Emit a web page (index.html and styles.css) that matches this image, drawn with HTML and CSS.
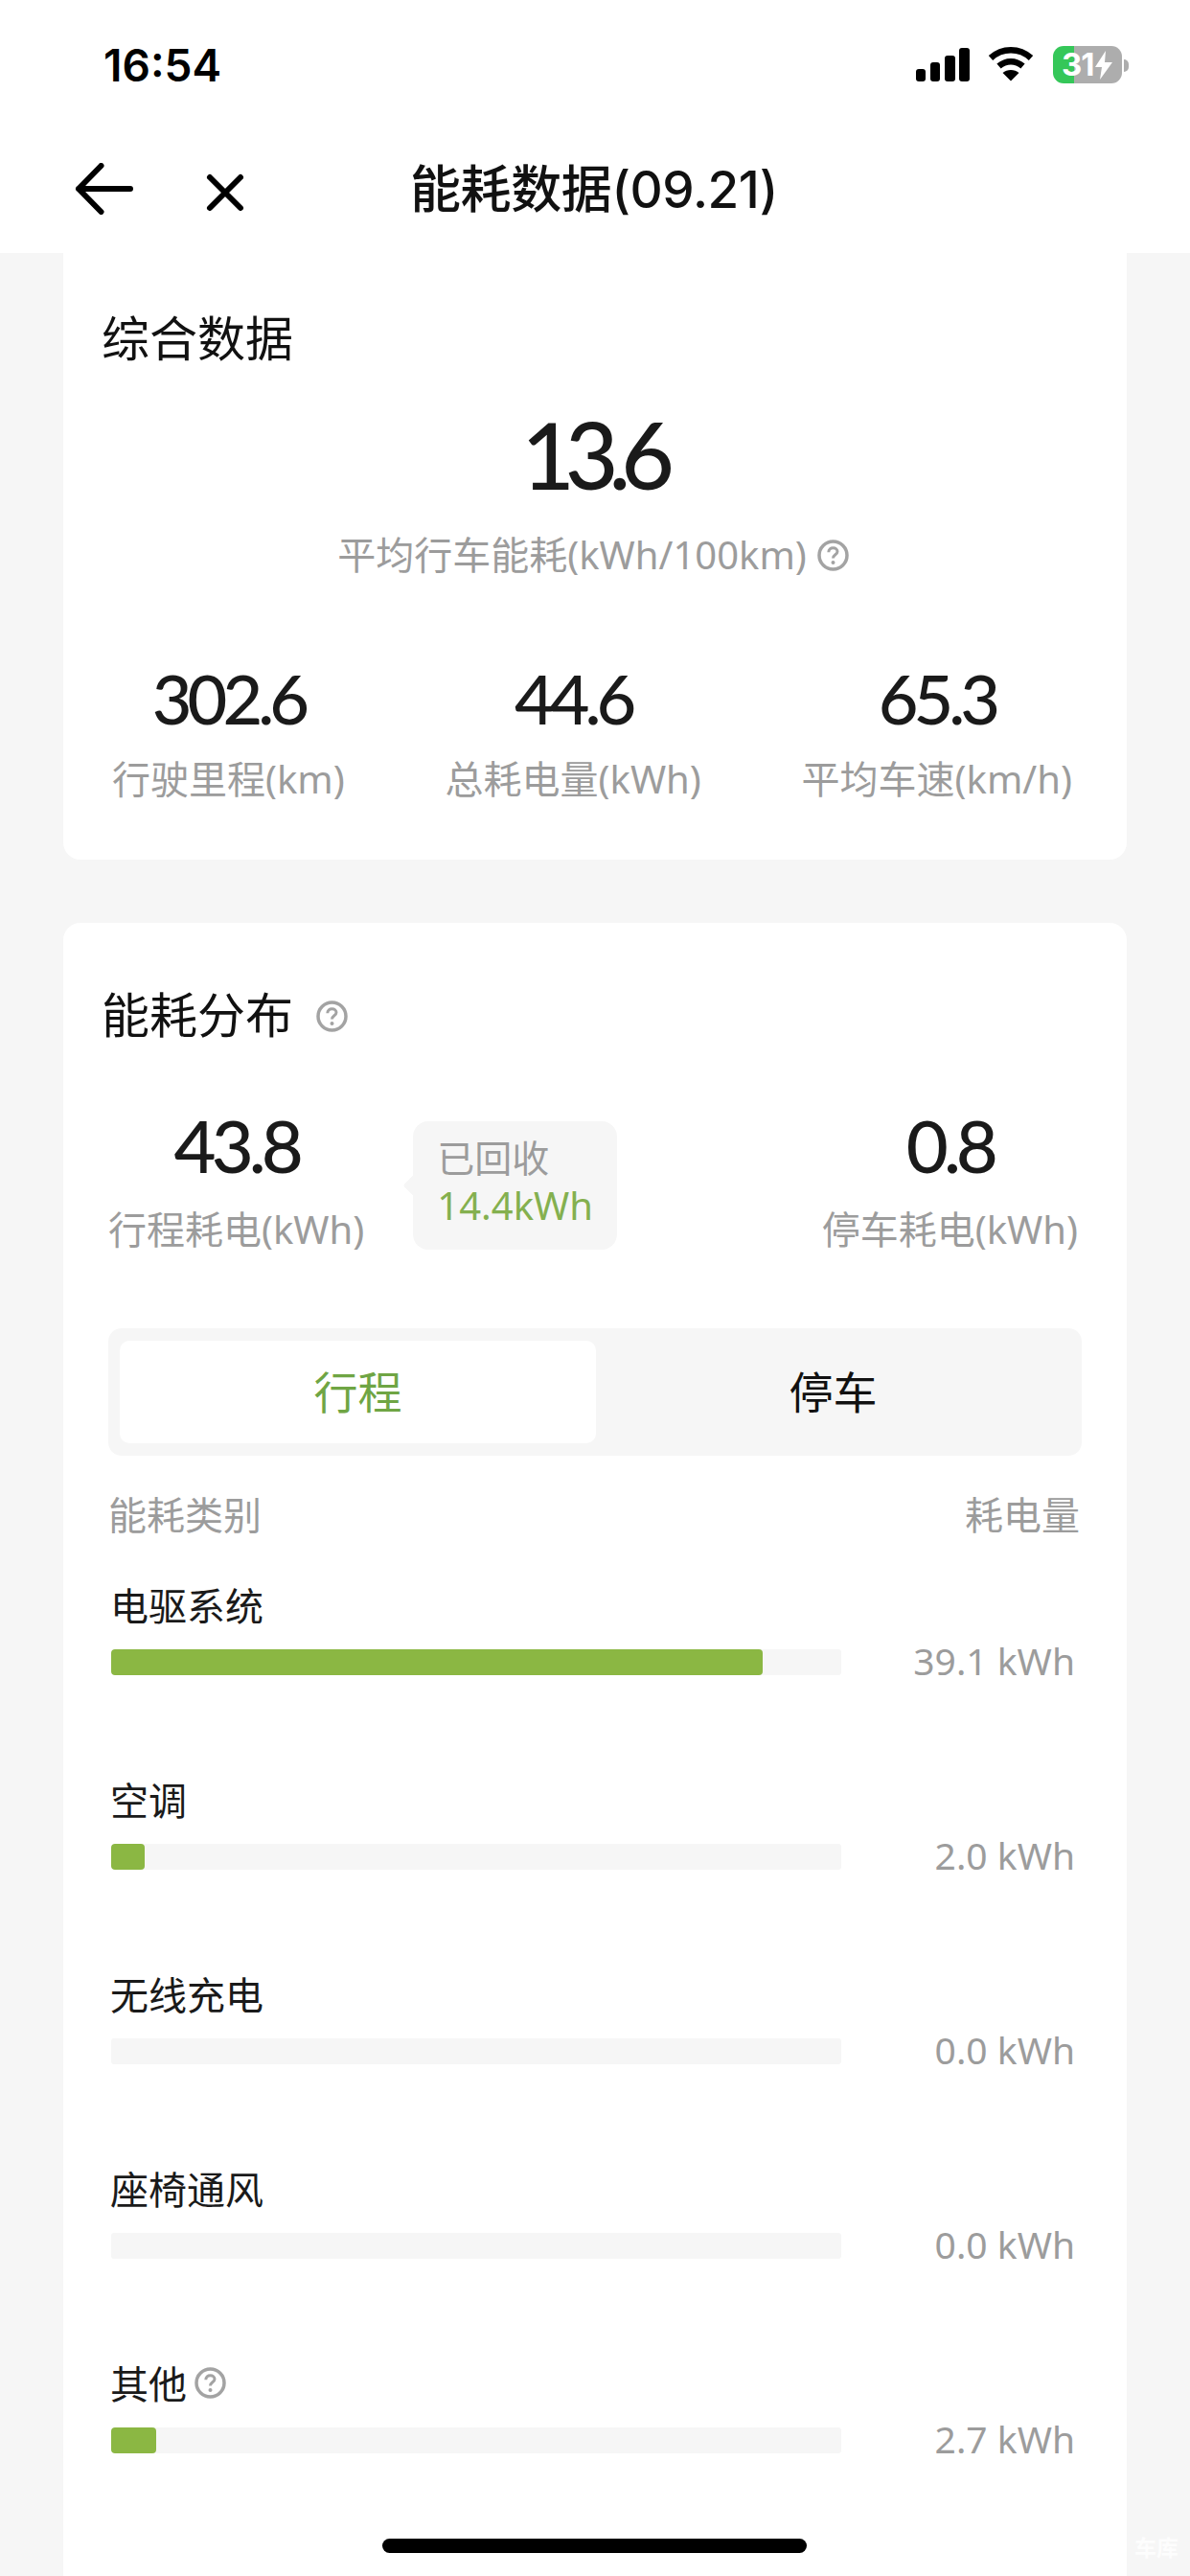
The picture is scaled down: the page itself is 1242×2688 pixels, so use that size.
FILE: index.html
```html
<!DOCTYPE html>
<html lang="zh-CN">
<head>
<meta charset="utf-8">
<title>能耗数据</title>
<link rel="stylesheet" href="styles.css">
</head>
<body>
<div class="page">
  <header class="top">
    <div class="status">
      <span class="time">16:54</span>
      <div class="status-icons">
        <svg class="signal" width="56" height="35" viewBox="0 0 56 35"><rect x="0" y="22" width="10" height="13" rx="3"/><rect x="15" y="15" width="10" height="20" rx="3"/><rect x="30" y="8" width="11" height="27" rx="3"/><rect x="45" y="0" width="11" height="35" rx="3"/></svg>
        <svg class="wifi" width="48" height="36" viewBox="0 0 48 36"><path d="M3 11.500C15 0.500 33 0.500 45 11.500" fill="none" stroke="#000" stroke-width="6.500"/><path d="M11.500 20C19 13.500 29 13.500 36.500 20" fill="none" stroke="#000" stroke-width="6.500"/><path d="M24 35.500L15.500 27C20 23 28 23 32.500 27Z"/></svg>
        <div class="battery"><span class="battery-num">31</span><svg class="bolt" width="18" height="30" viewBox="0 0 18 30"><path d="M11 0L0 17H7L5 30L18 12H10Z" fill="#fff"/></svg></div>
      </div>
    </div>
    <nav class="navbar">
      <svg class="back" width="62" height="54" viewBox="0 0 62 54"><path d="M27.500 3L4 27L27.500 51M4 27H58" fill="none" stroke="#000" stroke-width="6" stroke-linecap="round" stroke-linejoin="round"/></svg>
      <svg class="close" width="42" height="42" viewBox="0 0 42 42"><path d="M5 5L37 37M37 5L5 37" fill="none" stroke="#000" stroke-width="6" stroke-linecap="round"/></svg>
      <h1 class="nav-title">能耗数据(09.21)</h1>
    </nav>
  </header>

  <main class="content">
    <section class="card card-summary">
      <h2 class="card-title">综合数据</h2>
      <div class="hero">
        <div class="num num-xl">13.6</div>
        <div class="label hero-label">平均行车能耗(kWh/100km)
          <svg class="help" width="33" height="33" viewBox="0 0 33 33"><circle cx="16.500" cy="16.500" r="14.500" fill="none" stroke="#a3a3a3" stroke-width="3.500"/><path d="M11.800 13.200C11.800 10.300 14 8.800 16.500 8.800C19.100 8.800 21 10.400 21 12.600C21 15.800 16.500 15.800 16.500 19.500" fill="none" stroke="#a3a3a3" stroke-width="3"/><circle cx="16.500" cy="24" r="2" fill="#a3a3a3"/></svg>
        </div>
      </div>
      <div class="stats">
        <div class="stat"><div class="num">302.6</div><div class="label">行驶里程(km)</div></div>
        <div class="stat"><div class="num">44.6</div><div class="label">总耗电量(kWh)</div></div>
        <div class="stat"><div class="num">65.3</div><div class="label">平均车速(km/h)</div></div>
      </div>
    </section>

    <section class="card card-dist">
      <h2 class="card-title card-title-help">能耗分布
        <svg class="help" width="33" height="33" viewBox="0 0 33 33"><circle cx="16.500" cy="16.500" r="14.500" fill="none" stroke="#a3a3a3" stroke-width="3.500"/><path d="M11.800 13.200C11.800 10.300 14 8.800 16.500 8.800C19.100 8.800 21 10.400 21 12.600C21 15.800 16.500 15.800 16.500 19.500" fill="none" stroke="#a3a3a3" stroke-width="3"/><circle cx="16.500" cy="24" r="2" fill="#a3a3a3"/></svg>
      </h2>
      <div class="split">
        <div class="stat"><div class="num">43.8</div><div class="label">行程耗电(kWh)</div></div>
        <div class="bubble">
          <div class="bubble-label">已回收</div>
          <div class="bubble-value">14.4kWh</div>
        </div>
        <div class="stat"><div class="num">0.8</div><div class="label">停车耗电(kWh)</div></div>
      </div>
      <div class="tabs">
        <div class="tab tab-active">行程</div>
        <div class="tab">停车</div>
      </div>
      <div class="list-head"><span>能耗类别</span><span>耗电量</span></div>
      <div class="rows">
        <div class="row">
          <div class="row-name">电驱系统</div>
          <div class="row-line"><div class="track"><div class="fill" style="width:89.3%"></div></div><div class="row-val">39.1 kWh</div></div>
        </div>
        <div class="row">
          <div class="row-name">空调</div>
          <div class="row-line"><div class="track"><div class="fill" style="width:4.6%"></div></div><div class="row-val">2.0 kWh</div></div>
        </div>
        <div class="row">
          <div class="row-name">无线充电</div>
          <div class="row-line"><div class="track"></div><div class="row-val">0.0 kWh</div></div>
        </div>
        <div class="row">
          <div class="row-name">座椅通风</div>
          <div class="row-line"><div class="track"></div><div class="row-val">0.0 kWh</div></div>
        </div>
        <div class="row">
          <div class="row-name row-name-help">其他
            <svg class="help" width="33" height="33" viewBox="0 0 33 33"><circle cx="16.500" cy="16.500" r="14.500" fill="none" stroke="#a3a3a3" stroke-width="3.500"/><path d="M11.800 13.200C11.800 10.300 14 8.800 16.500 8.800C19.100 8.800 21 10.400 21 12.600C21 15.800 16.500 15.800 16.500 19.500" fill="none" stroke="#a3a3a3" stroke-width="3"/><circle cx="16.500" cy="24" r="2" fill="#a3a3a3"/></svg>
          </div>
          <div class="row-line"><div class="track"><div class="fill" style="width:6.2%"></div></div><div class="row-val">2.7 kWh</div></div>
        </div>
      </div>
    </section>
  </main>

  <div class="home-bar"></div>
  <div class="watermark">车库</div>
</div>
</body>
</html>
```

FILE: styles.css
```css
* { box-sizing: border-box; margin: 0; padding: 0; }
html, body { width: 1242px; height: 2688px; overflow: hidden; background: #f6f6f6; }
body { font-family: "Noto Sans", "Noto Sans CJK SC", sans-serif; color: #1a1a1a; }
.page { position: relative; width: 1242px; height: 2688px; overflow: hidden; }

.top { height: 264px; background: #fff; display: flex; flex-direction: column; }
.status { height: 135px; padding: 48px 71px 0 108px; display: flex; justify-content: space-between; align-items: flex-start; }
.time { font-family: "Inter", sans-serif; font-weight: 600; font-size: 46px; line-height: 40px; color: #000; }
.status-icons { display: flex; align-items: flex-start; }
.signal { display: block; margin-top: 2px; margin-right: 19px; }
.wifi { display: block; margin-top: 1px; margin-right: 20px; }
.battery { position: relative; width: 72px; height: 39px; border-radius: 11px; background: linear-gradient(90deg, #35c759 0 22px, #adadad 22px 100%); display: flex; align-items: center; padding-left: 9px; }
.battery::after { content: ""; position: absolute; left: 74px; top: 14px; width: 5px; height: 13px; border-radius: 0 5px 5px 0; background: #adadad; }
.battery-num { font-family: "Inter", sans-serif; font-weight: 700; font-size: 33px; line-height: 39px; color: #fff; letter-spacing: -1px; }
.bolt { display: block; margin-left: 1px; }

.navbar { height: 129px; display: flex; align-items: flex-start; padding: 35px 0 0 78px; }
.back { display: block; flex: none; }
.close { display: block; flex: none; margin: 10px 0 0 74px; }
.nav-title { font-family: "Inter", "Noto Sans CJK SC", sans-serif; font-weight: 500; font-size: 53px; line-height: 66px; color: #111; margin: -5px 0 0 172px; white-space: nowrap; letter-spacing: -0.4px; }

.content { padding: 0 66px; display: flex; flex-direction: column; gap: 66px; }
.card { background: #fff; width: 1110px; }
.card-summary { height: 633px; border-radius: 0 0 18px 18px; padding: 51px 55px 0 51px; }
.card-dist { height: 1760px; border-radius: 18px; padding: 58px 47px 0 47px; }

.card-title { font-weight: 400; font-size: 50px; line-height: 70px; color: #111; font-family: "Noto Sans CJK SC", sans-serif; }
.card-summary .card-title { margin-left: -11px; }
.card-title-help { display: flex; align-items: center; gap: 24px; }
.card-dist .card-title { margin-left: -7px; }
.card-title-help .help { position: relative; top: 4px; }

.num { font-family: "Lato", sans-serif; font-weight: 500; font-size: 72px; line-height: 72px; letter-spacing: -5px; color: #1a1a1a; text-align: center; }
.num-xl { font-size: 96px; line-height: 96px; letter-spacing: -10px; }
.split .num { font-size: 76px; }
.label { font-size: 40px; line-height: 50px; color: #9c9c9c; text-align: center; white-space: nowrap; font-family: "Noto Sans", "Noto Sans CJK SC", sans-serif; font-weight: 400; }
.hero { display: flex; flex-direction: column; align-items: center; margin-top: 41px; }
.hero-label { margin-top: 32px; display: flex; align-items: center; gap: 11px; }
.help { display: block; flex: none; }

.stats { display: flex; justify-content: space-between; margin-top: 88px; padding-right: 2px; }
.stat { display: flex; flex-direction: column; align-items: center; }
.stat .label { margin-top: 24px; }

.split { display: flex; align-items: flex-start; margin-top: 68px; padding-right: 4px; }
.split .stat .label { margin-top: 27px; }
.bubble { position: relative; width: 213px; height: 134px; background: #f6f6f6; border-radius: 16px; margin: 11px 0 0 51px; padding: 10px 0 0 25px; }
.bubble::before { content: ""; position: absolute; left: -7px; top: 59px; width: 16px; height: 16px; background: #f6f6f6; transform: rotate(45deg); border-radius: 2px; }
.bubble-label { font-size: 39px; line-height: 52px; color: #9c9c9c; font-family: "Noto Sans CJK SC", sans-serif; font-weight: 400; }
.bubble-value { font-size: 40px; line-height: 52px; color: #84b04f; white-space: nowrap; }
.split .stat:last-child { margin-left: auto; }

.tabs { display: flex; height: 133px; margin-top: 78px; padding: 13px 12px; background: #f6f6f6; border-radius: 14px; width: 1016px; }
.tab { flex: 1; display: flex; align-items: center; justify-content: center; padding-bottom: 6px; font-size: 46px; color: #111; border-radius: 10px; font-family: "Noto Sans CJK SC", sans-serif; font-weight: 400; }
.tab-active { flex: none; width: 497px; background: #fff; color: #6fa544; }

.list-head { display: flex; justify-content: space-between; font-size: 40px; line-height: 50px; color: #9c9c9c; margin-top: 35px; font-family: "Noto Sans CJK SC", sans-serif; font-weight: 400; padding-right: 2px; }

.rows { margin-top: 45px; display: flex; flex-direction: column; gap: 82px; padding-left: 3px; }
.row { height: 121px; display: flex; flex-direction: column; }
.row-name { font-size: 40px; line-height: 50px; color: #1a1a1a; font-family: "Noto Sans CJK SC", sans-serif; font-weight: 400; height: 50px; margin-left: -1px; }
.row-name-help { display: flex; align-items: center; gap: 8px; }
.row-line { display: flex; align-items: flex-start; margin-top: 22px; }
.track { width: 762px; height: 27px; background: #f6f6f6; border-radius: 3px; overflow: hidden; flex: none; }
.fill { height: 27px; background: #8bb743; border-radius: 4px; }
.row-val { margin-left: auto; margin-right: 7px; font-size: 39px; line-height: 23px; color: #9c9c9c; white-space: nowrap; }

.home-bar { position: absolute; left: 399px; top: 2649px; width: 443px; height: 15px; background: #000; border-radius: 8px; }
.watermark { position: absolute; left: 1184px; top: 2643px; font-size: 23px; line-height: 28px; font-weight: 700; color: #fff; opacity: .8; font-family: "Noto Sans CJK SC", sans-serif; }
```
